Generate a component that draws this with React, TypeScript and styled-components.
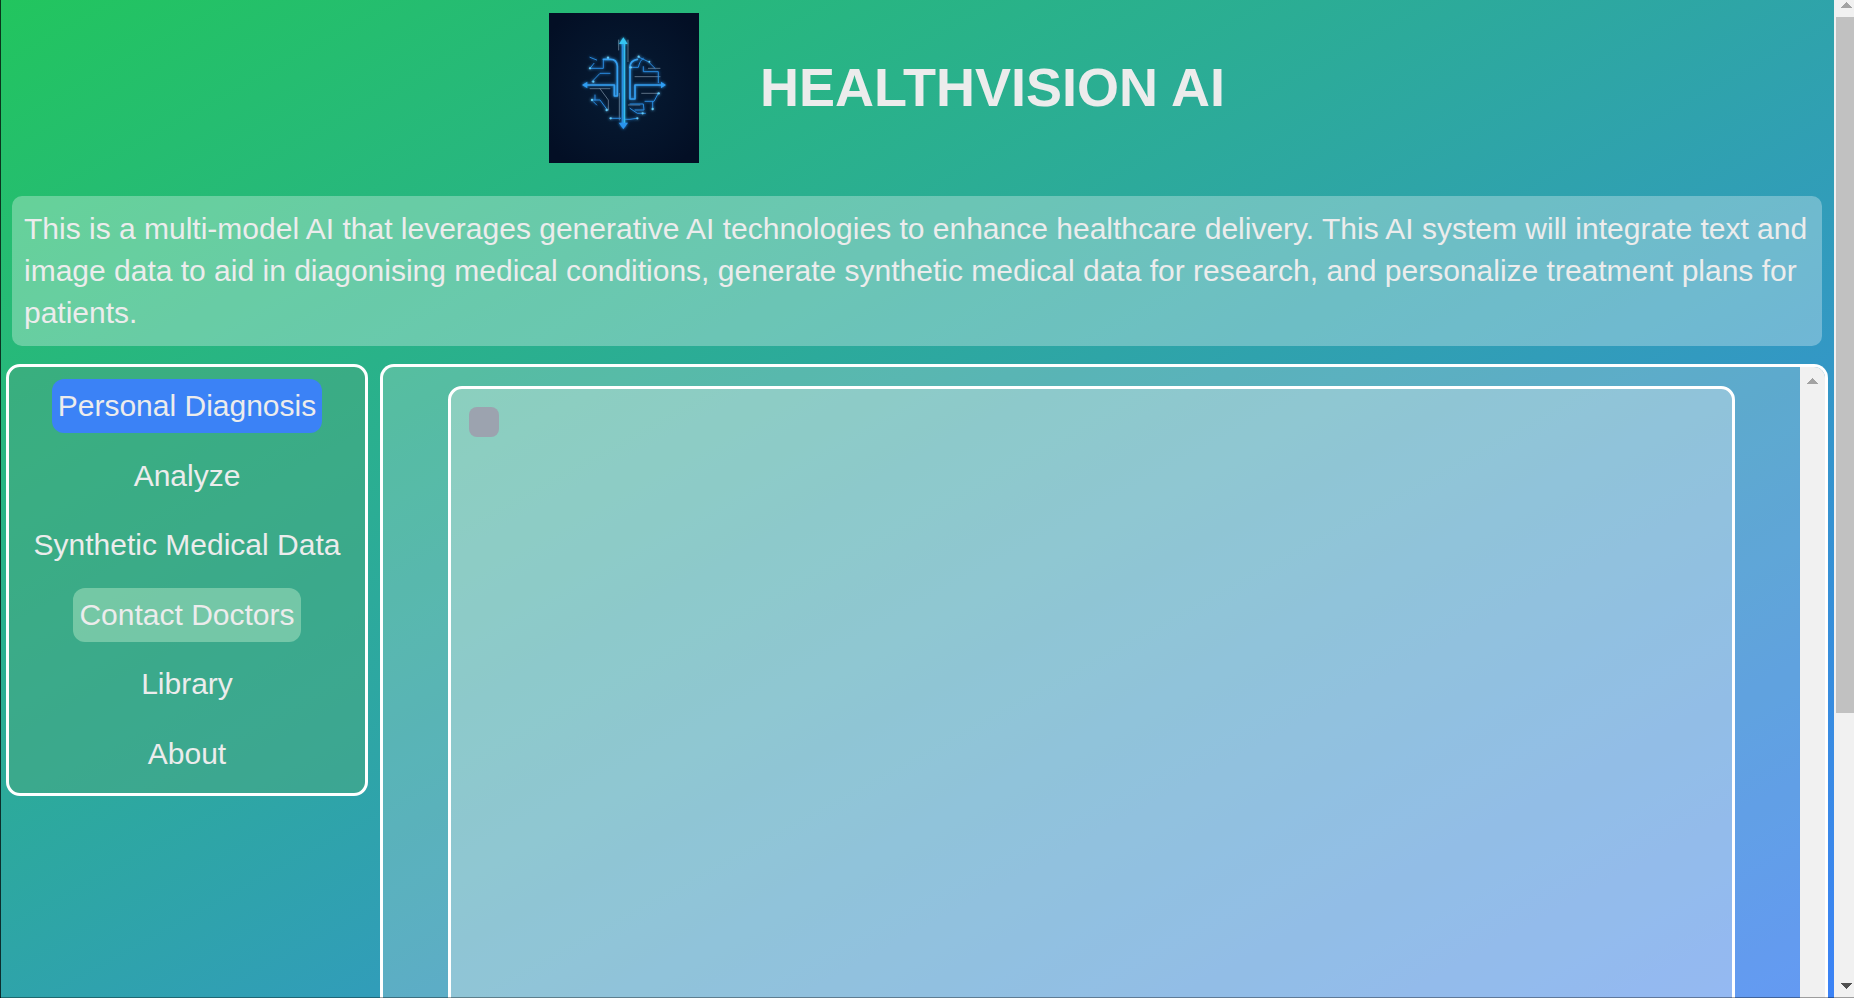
import React from "react";
import styled, { createGlobalStyle } from "styled-components";

const Global = createGlobalStyle`
  html, body { margin: 0; padding: 0; height: 100%; overflow: hidden; background: #f1f1f1; }
  body { font-family: "Liberation Sans", Arial, sans-serif; color: #e8ecea; }
`;
const Viewport = styled.div`
  position: relative; display: flex; width: 100%; height: 100vh; overflow: hidden;
  &::after { content: ""; position: absolute; inset: 0; pointer-events: none;
    box-shadow: inset 1px 0 rgba(0,0,0,.72), inset 0 -1px rgba(0,0,0,.35); }
`;
const Page = styled.div`
  flex: 1; min-width: 0; height: 998px; box-sizing: border-box; padding: 13px 6px 0 6px; display: flex; flex-direction: column;
  background: linear-gradient(to bottom right, #22c55e, #3b82f6); border-right: 2px solid #f1f1f1;
`;
const Header = styled.header`
  display: flex; align-items: center; gap: 61px; padding-left: 543px; height: 150px; flex: none;
`;
const Logo = styled.svg` width: 150px; height: 150px; flex: none; display: block; `;
const Title = styled.h1` margin: 0 0 2px; font-size: 54px; font-weight: 700; line-height: 1; color: #ececec; `;
const Description = styled.p`
  margin: 33px 0 0 6px; width: 1810px; box-sizing: border-box; padding: 12px; flex: none; height: 150px;
  background: rgba(255,255,255,.3); border-radius: 10px; font-size: 30px; line-height: 42px; color: #ececec;
`;
const Columns = styled.div` display: flex; align-items: flex-start; gap: 12px; margin-top: 18px; flex: none; `;
const Nav = styled.nav`
  width: 362px; height: 432px; flex: none; box-sizing: border-box; border: 3px solid #fff; border-radius: 14px;
  background: rgba(72,168,129,.55); display: flex; flex-direction: column; align-items: center; padding-top: 12px;
`;
const NavItem = styled.div<{ $tone?: "active" | "soft" }>`
  height: 54px; margin-bottom: 15.6px; flex: none; box-sizing: border-box; padding: 0 6px; display: flex; align-items: center; border-radius: 12px;
  font-size: 30px; color: #ececec; white-space: nowrap;
  background: ${(p) => (p.$tone === "active" ? "#3b82f6" : p.$tone === "soft" ? "rgba(224,255,222,.35)" : "transparent")};
`;
const Panel = styled.section`
  width: 1448px; height: 800px; flex: none; box-sizing: border-box; border: 3px solid #fff; border-bottom: 0; border-radius: 14px 14px 0 0;
  background: rgba(245,238,235,.22); display: flex; overflow: hidden;
`;
const PanelBody = styled.div` flex: 1; min-width: 0; padding: 19px 0 0 65px; box-sizing: border-box; `;
const Card = styled.div`
  width: 1287px; height: 900px; box-sizing: border-box; border: 3px solid #fff; border-radius: 14px;
  background: rgba(250,245,245,.33); padding: 18px;
`;
const Chip = styled.div` width: 30px; height: 30px; border-radius: 8px; background: #9ca3af; `;
const Track = styled.div<{ $w: number }>`
  width: ${(p) => p.$w}px; flex: none; background: #f1f1f1; display: flex; flex-direction: column; align-items: stretch; height: 100%;
`;
const ArrowBox = styled.div<{ $top?: number; $bottom?: number; $shift?: number }>`
  height: 17px; flex: none; box-sizing: border-box; display: flex; justify-content: center;
  align-items: ${(p) => (p.$top !== undefined ? "flex-start" : "flex-end")};
  padding-top: ${(p) => p.$top ?? 0}px; padding-bottom: ${(p) => p.$bottom ?? 0}px; padding-left: ${(p) => p.$shift ?? 0}px;
`;
const Thumb = styled.div<{ $h: number }>` height: ${(p) => p.$h}px; flex: none; background: #c1c1c1; `;
const Spacer = styled.div` flex: 1; `;
const Arrow = styled.svg` width: 11px; height: 6px; display: block; shape-rendering: crispEdges; `;

const Up = ({ c }: { c: string }) => <Arrow viewBox="0 0 11 6"><path d="M5 0h1v1h1v1h1v1h1v1h1v1h1v1H0V5h1V4h1V3h1V2h1V1h1Z" fill={c} /></Arrow>;
const Down = ({ c }: { c: string }) => <Arrow viewBox="0 0 11 6"><path d="M5 6h1V5h1V4h1V3h1V2h1V1h1V0H0v1h1v1h1v1h1v1h1v1h1Z" fill={c} /></Arrow>;

const LogoArt = () => (
  <Logo viewBox="0 0 150 150">
    <defs>
      <radialGradient id="lg" cx="50%" cy="50%" r="62%">
        <stop offset="0" stopColor="#071c34" />
        <stop offset="1" stopColor="#030f25" />
      </radialGradient>
      <filter id="gl" x="-30%" y="-30%" width="160%" height="160%">
        <feGaussianBlur stdDeviation="4" result="b" />
        <feMerge><feMergeNode in="b" /><feMergeNode in="SourceGraphic" /></feMerge>
      </filter>
    </defs>
    <rect width="150" height="150" fill="url(#lg)" />
    <g transform="translate(31 17) scale(.3333)" fill="none" strokeLinecap="round" strokeLinejoin="round">
      <g stroke="#7c90a4" strokeWidth="2.2">
        <path d="M30 176H90M60 176 85 210V240M116 60V30" />
        <path d="M185 190H232M165 140H240M205 115H240M144 30V95" />
        <path d="M118 190V270M145 225H180" />
      </g>
      <g filter="url(#gl)">
        <g stroke="#2a8fe6" strokeWidth="2.8">
          <path d="M28 115H70V90M36 155 60 130H90M42 100 30 115M50 90 30 82" />
          <path d="M150 112H175Q180 90 190 85M190 110V125H235V158M178 82 205 95 225 115" />
          <path d="M35 210H60L82 240M45 195V210M50 225 40 215" />
          <path d="M235 190 222 214H195M218 235V215M150 222H190L192 240H165" />
          <path d="M90 265H122M136 268H150L170 265" />
          <path d="M150 235 172 250H196" />
        </g>
        <g stroke="#35a0f2" strokeWidth="5">
          <path d="M16 165H103V198H112V108Q110 88 92 88H70" />
          <path d="M248 165H165V207H150V108Q152 92 172 88" />
        </g>
        <path d="M127 38V288" stroke="#2a8fe6" strokeWidth="3.5" />
        <path d="M133 38V288" stroke="#33bdf3" strokeWidth="5" />
        <path d="M130 22 117 42H143Z" fill="#35c5f2" />
        <path d="M130 298 116 278H144Z" fill="#2a94ee" />
        <path d="M6 165 22 155V175Z" fill="#2f9df2" />
        <path d="M258 165 243 155V175Z" fill="#2f9df2" />
        <g fill="#63c9f7">
          <circle cx="30" cy="115" r="3.5" /><circle cx="84" cy="83" r="3.5" /><circle cx="176" cy="80" r="3.5" />
          <circle cx="40" cy="155" r="3.5" /><circle cx="36" cy="210" r="3.5" /><circle cx="80" cy="240" r="3.5" />
          <circle cx="236" cy="190" r="3.5" /><circle cx="218" cy="237" r="3.5" /><circle cx="152" cy="112" r="3.5" />
          <circle cx="92" cy="265" r="3.5" /><circle cx="172" cy="265" r="3.5" /><circle cx="208" cy="95" r="3" />
          <circle cx="188" cy="250" r="3.5" />
        </g>
      </g>
    </g>
  </Logo>
);

const items: { label: string; tone?: "active" | "soft" }[] = [
  { label: "Personal Diagnosis", tone: "active" },
  { label: "Analyze" },
  { label: "Synthetic Medical Data" },
  { label: "Contact Doctors", tone: "soft" },
  { label: "Library" },
  { label: "About" },
];

export default function App() {
  return (
    <Viewport>
      <Global />
      <Page>
        <Header>
          <LogoArt />
          <Title>HEALTHVISION AI</Title>
        </Header>
        <Description>
          This is a multi-model AI that leverages generative AI technologies to enhance healthcare delivery. This AI system will integrate text and image data to aid in diagonising medical conditions, generate synthetic medical data for research, and personalize treatment plans for patients.
        </Description>
        <Columns>
          <Nav>
            {items.map((i) => <NavItem key={i.label} $tone={i.tone}>{i.label}</NavItem>)}
          </Nav>
          <Panel>
            <PanelBody>
              <Card><Chip /></Card>
            </PanelBody>
            <Track $w={25}>
              <ArrowBox $top={11}><Up c="#a3a3a3" /></ArrowBox>
              <Spacer />
              <ArrowBox $bottom={2}><Down c="#505050" /></ArrowBox>
            </Track>
          </Panel>
        </Columns>
      </Page>
      <Track $w={18}>
        <ArrowBox $top={2} $shift={3}><Up c="#a3a3a3" /></ArrowBox>
        <Thumb $h={696} />
        <Spacer />
        <ArrowBox $bottom={9} $shift={3}><Down c="#505050" /></ArrowBox>
      </Track>
    </Viewport>
  );
}
